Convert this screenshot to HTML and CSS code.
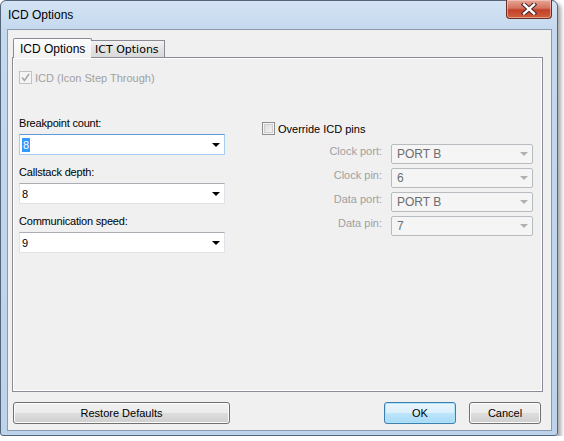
FILE: index.html
```html
<!doctype html>
<html lang="en">
	<head>
		<meta http-equiv="Content-Type" content="text/html; charset=utf-8">
		<title>ICD Options</title>
		<meta name="viewport" content="width=device-width, initial-scale=1.0">
		<link rel="stylesheet" href="styles.css">
	</head>
	<body>
	<div class="win">
		<div class="caption">
			<span class="caption-text">ICD Options</span>
			<span class="close">
				<svg width="16" height="12" viewBox="0 0 16 12"><path d="M3 1.5 L13 10.5 M13 1.5 L3 10.5" stroke="#4a2020" stroke-width="4.4" stroke-linecap="square"/><path d="M3 1.5 L13 10.5 M13 1.5 L3 10.5" stroke="#fff" stroke-width="2.4" stroke-linecap="square"/></svg>
			</span>
		</div>
		<div class="client">
			<!-- tab headers -->
			<div class="tabs">
				<span class="tab tab-on">ICD Options</span>
				<span class="tab tab-off">ICT Options</span>
			</div>
			<div class="pane">
				<label class="chk chk-dis">
					<span class="box box-dis">
						<svg width="9" height="9" viewBox="0 0 9 9"><path d="M1 4.5 L3.5 7.5 L8 1" fill="none" stroke="#a9a9a9" stroke-width="1.6"/></svg>
					</span>
					ICD (Icon Step Through)
				</label>
				<div class="cols">
					<div class="col-left">
						<div class="lbl">Breakpoint count:</div>
						<div class="combo combo-focus"><span class="sel">8</span><span class="arrow"></span></div>
						<div class="lbl">Callstack depth:</div>
						<div class="combo"><span>8</span><span class="arrow"></span></div>
						<div class="lbl">Communication speed:</div>
						<div class="combo"><span>9</span><span class="arrow"></span></div>
					</div>
					<div class="col-right">
						<label class="chk">
							<span class="box"></span>
							Override ICD pins
						</label>
						<div class="pins">
							<span class="pin-lbl">Clock port:</span>
							<div class="combo combo-dis"><span>PORT B</span><span class="arrow"></span></div>
							<span class="pin-lbl">Clock pin:</span>
							<div class="combo combo-dis"><span>6</span><span class="arrow"></span></div>
							<span class="pin-lbl">Data port:</span>
							<div class="combo combo-dis"><span>PORT B</span><span class="arrow"></span></div>
							<span class="pin-lbl">Data pin:</span>
							<div class="combo combo-dis"><span>7</span><span class="arrow"></span></div>
						</div>
					</div>
				</div>
			</div>
			<div class="buttons">
				<span class="btn btn-wide">Restore Defaults</span>
				<span class="spacer"></span>
				<span class="btn btn-default">OK</span>
				<span class="btn">Cancel</span>
			</div>
		</div>
	</div>
	</body>
</html>
```
FILE: styles.css
```css
*{margin: 0;padding: 0;box-sizing: border-box;}
body{
	background: #fff;
	font-family: "Liberation Sans", Arial, sans-serif;
	font-size: 11px;
	color: #000;
}

/* window frame */
.win{
	width: 558px;
	height: 436px;
	border: 1px solid #55657a;
	border-radius: 6px 6px 3px 3px;
	background: linear-gradient(to bottom, #d3e3f4 0, #c4d8ee 30px, #bcd3eb 100%);
	box-shadow: 3px 3px 4px rgba(0,0,0,0.35);
	display: flex;
	flex-direction: column;
	padding: 0 5px 4px 6px;
}
.caption{
	height: 28px;
	display: flex;
	align-items: flex-start;
}
.caption-text{
	font-size: 12px;
	margin: 7px 0 0 1px;
	flex: 1;
}
.close{
	width: 46px;
	height: 19px;
	margin: -1px 0 0 0;
	border: 1px solid #6b2e26;
	border-top: none;
	border-radius: 0 0 4px 4px;
	background: linear-gradient(to bottom, #e8a596 0, #d47360 45%, #c2412a 55%, #d0603d 100%);
	display: flex;
	align-items: center;
	justify-content: center;
	box-shadow: inset 0 0 0 1px rgba(255,220,210,0.5);
}

/* dialog client area */
.client{
	flex: 1;
	background: #f0f0f0;
	border: 1px solid #8a9bb0;
	display: flex;
	flex-direction: column;
	padding: 8px 8px 6px 4px;
}
.tabs{
	display: flex;
	align-items: flex-end;
	height: 19px;
	padding-left: 1px;
	position: relative;
	z-index: 1;
}
.tab{
	border: 1px solid #898c95;
	border-bottom: none;
	display: flex;
	align-items: center;
}
.tab-on{
	height: 20px;
	margin-bottom: -1px;
	width: 79px;
	background: linear-gradient(to bottom, #fdfdfd, #f2f2f2);
	font-size: 12px;
	padding-left: 6px;
	border-radius: 2px 2px 0 0;
}
.tab-off{
	height: 17px;
	width: 74px;
	margin-left: -1px;
	border-left: none;
	background: linear-gradient(to bottom, #f2f2f2, #e3e3e3 50%, #d9d9d9);
	font-family: "DejaVu Sans", Verdana, sans-serif;
	font-size: 11px;
	padding: 1px 0 0 4px;
}
.pane{
	height: 335px;
	border: 1px solid #898c95;
	box-shadow: inset -1px -1px 0 #fff, inset 1px 1px 0 #fff;
	background: #f0f0f0;
	padding: 13px 6px 0 6px;
}

/* checkboxes */
.chk{
	display: flex;
	align-items: center;
	height: 13px;
	gap: 3px;
}
.chk-dis{color: #a0a0a0;}
.box{
	width: 13px;
	height: 13px;
	border: 1px solid #8f8f8f;
	background: linear-gradient(135deg, #d8d8d8, #f7f7f7);
	box-shadow: inset 0 0 0 1px #f4f4f4, inset 0 0 0 2px #cfcfcf;
	display: flex;
	align-items: center;
	justify-content: center;
}
.box-dis{
	border-color: #c2c2c2;
	background: #f4f4f4;
	box-shadow: none;
}

.cols{
	display: flex;
	gap: 37px;
	margin-top: 33px;
}
.col-left{
	width: 206px;
}
.lbl{
	height: 13px;
	line-height: 13px;
	margin-bottom: 4px;
	letter-spacing: -0.2px;
}

/* drop-down lists */
.combo{
	height: 21px;
	background: #fff;
	border: 1px solid #dfe3e8;
	border-top-color: #abadb3;
	display: flex;
	align-items: center;
	justify-content: space-between;
	padding: 0 4px 0 2px;
	margin-bottom: 11px;
}
.combo-focus{
	border-color: #a9cdf0;
	border-top-color: #5d9bd8;
}
.sel{
	background: #3399ff;
	color: #fff;
	padding: 0 1px;
	line-height: 14px;
}
.arrow{
	width: 0;
	height: 0;
	border-left: 4px solid transparent;
	border-right: 4px solid transparent;
	border-top: 4px solid #000;
}

.col-right{
	width: 271px;
	margin-top: 5px;
}
.pins{
	display: grid;
	grid-template-columns: 120px 142px;
	column-gap: 9px;
	row-gap: 4px;
	margin-top: 9px;
	align-items: center;
}
.pin-lbl{
	text-align: right;
	color: #a0a0a0;
	margin-top: -7px;
}
.combo-dis{
	height: 20px;
	margin-bottom: 0;
	border: 1px solid #b8bcc0;
	border-radius: 2px;
	background: #f5f5f5;
	color: #6d6d6d;
	padding-left: 5px;
	font-size: 12px;
}
.combo-dis .arrow{
	border-top-color: #b0b0b0;
}

/* bottom buttons */
.buttons{
	display: flex;
	margin-top: 10px;
	padding-left: 1px;
	padding-right: 2px;
	gap: 13px;
}
.spacer{flex: 1;}
.btn{
	width: 72px;
	height: 22px;
	border: 1px solid #707070;
	border-radius: 3px;
	background: linear-gradient(to bottom, #f2f2f2 0, #ebebeb 50%, #dddddd 51%, #cfcfcf 100%);
	box-shadow: inset 0 0 0 1px #fcfcfc;
	display: flex;
	align-items: center;
	justify-content: center;
}
.btn-wide{width: 217px;}
.btn-default{
	border-color: #3c7fb1;
	box-shadow: inset 0 0 0 1px #aee3fa;
	background: linear-gradient(to bottom, #eaf6fd 0, #d9f0fc 50%, #bee6fd 51%, #a7d9f5 100%);
}
```
